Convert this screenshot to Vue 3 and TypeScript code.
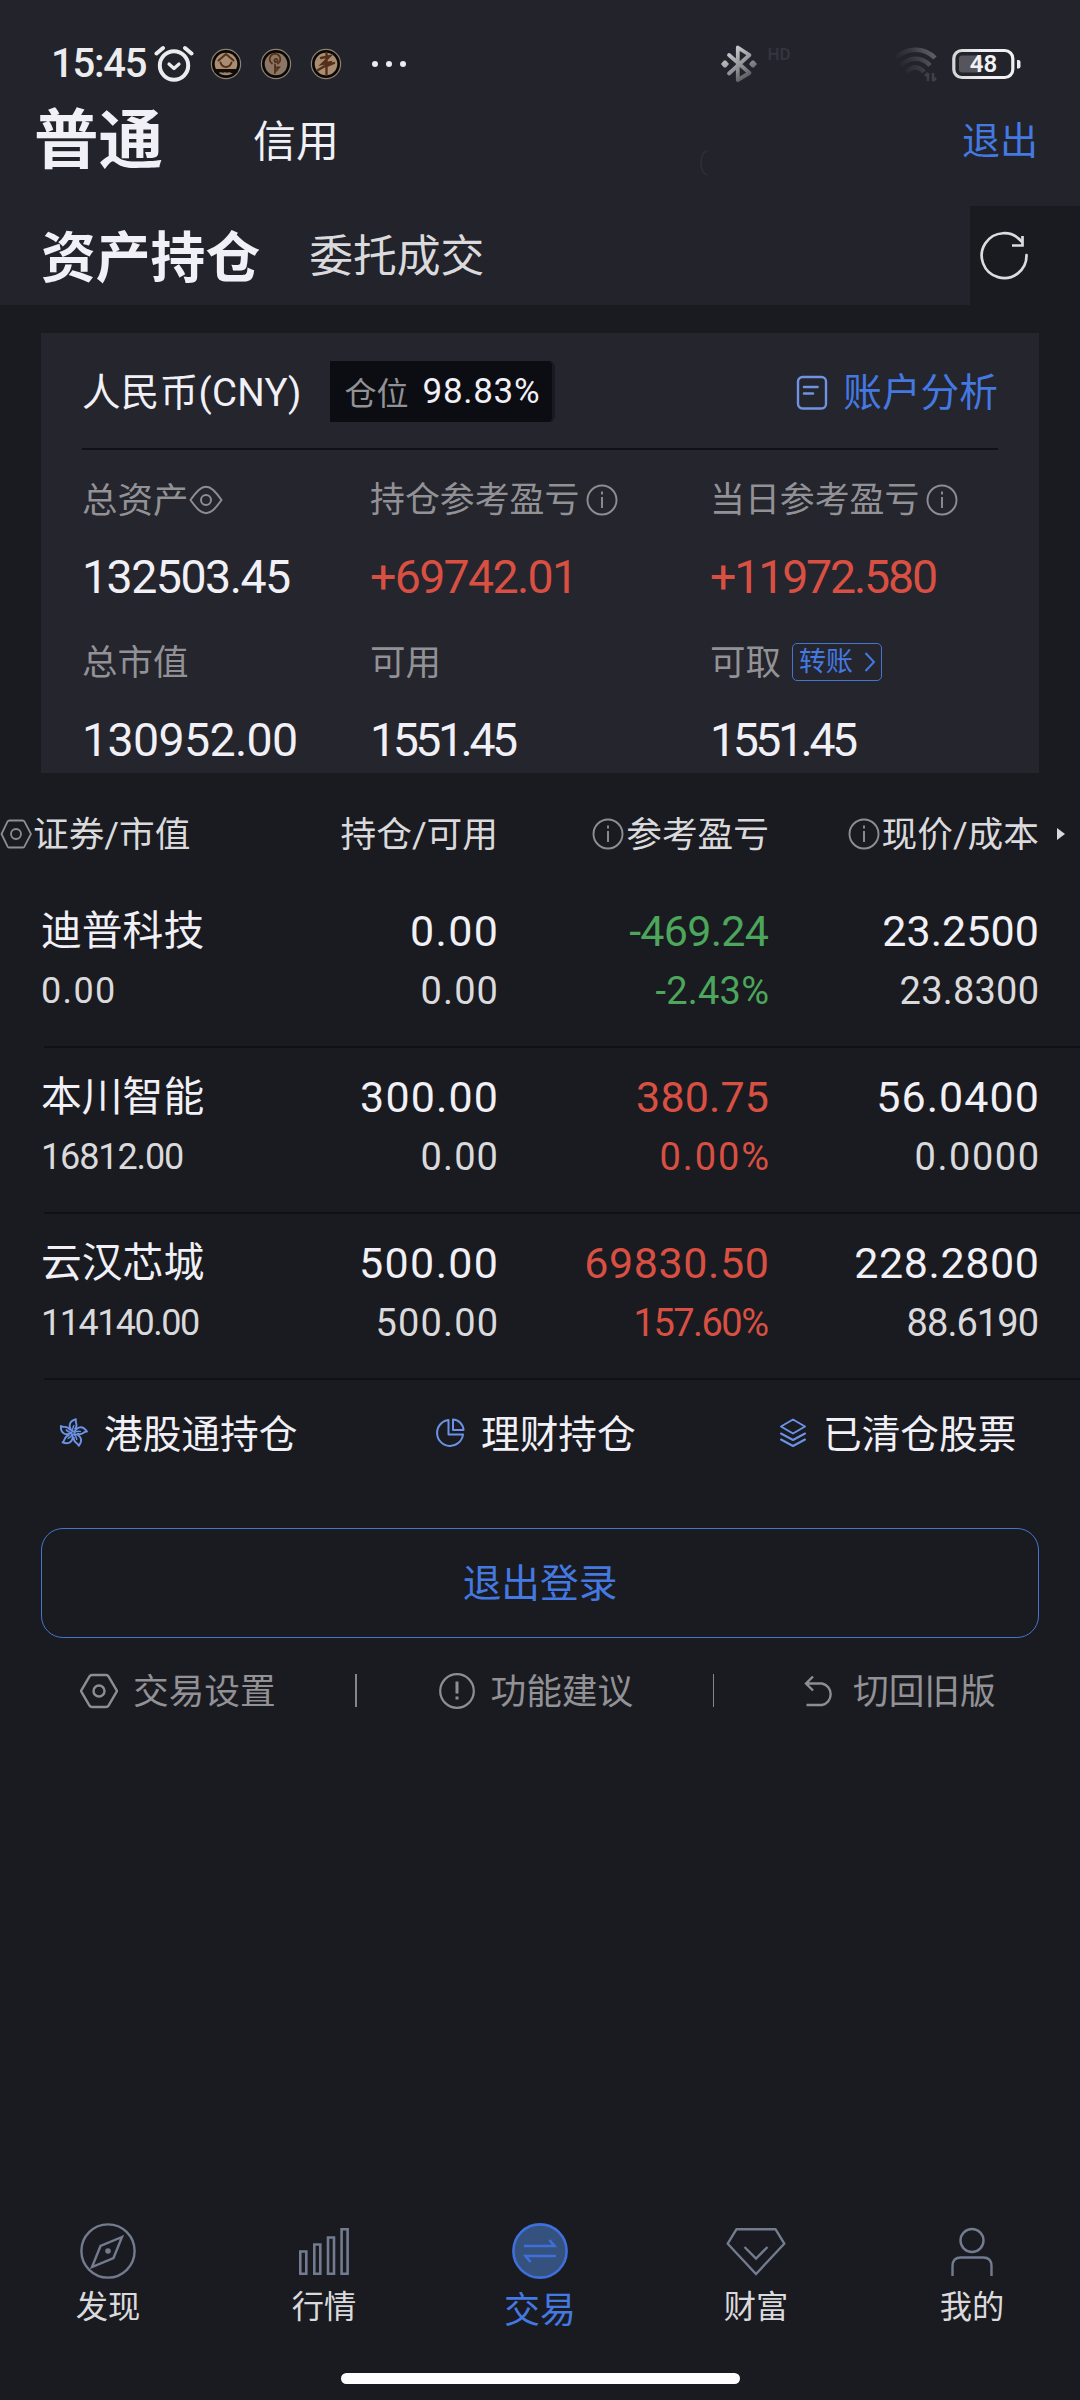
<script setup lang="ts">
import type { Directive } from 'vue'

interface Cell {
  text: string
  width: number
}

interface Holding {
  name: string
  value: Cell
  position: Cell
  available: Cell
  profit: Cell
  rate: Cell
  price: Cell
  cost: Cell
  trend: 'up' | 'down'
}

/* Spreads the characters of a figure so that it takes up the given width. */
const vFit: Directive<HTMLElement, number> = {
  mounted(el, binding) {
    const size = parseFloat(getComputedStyle(el).fontSize)
    const natural = el.getBoundingClientRect().width
    const count = (el.textContent ?? '').length
    const spacing = (binding.value + size * 0.09 - natural) / (count - 1)
    el.style.letterSpacing = `${spacing}px`
    el.style.marginRight = `${-spacing}px`
  },
}

const cell = (text: string, width: number): Cell => ({ text, width })

const holdings: Holding[] = [
  {
    name: '迪普科技',
    value: cell('0.00', 71),
    position: cell('0.00', 84),
    available: cell('0.00', 74),
    profit: cell('-469.24', 136),
    rate: cell('-2.43%', 110),
    price: cell('23.2500', 153),
    cost: cell('23.8300', 136),
    trend: 'down',
  },
  {
    name: '本川智能',
    value: cell('16812.00', 140),
    position: cell('300.00', 134),
    available: cell('0.00', 74),
    profit: cell('380.75', 129),
    rate: cell('0.00%', 106),
    price: cell('56.0400', 159),
    cost: cell('0.0000', 121),
    trend: 'up',
  },
  {
    name: '云汉芯城',
    value: cell('114140.00', 156),
    position: cell('500.00', 135),
    available: cell('500.00', 119),
    profit: cell('69830.50', 181),
    rate: cell('157.60%', 132),
    price: cell('228.2800', 181),
    cost: cell('88.6190', 129),
    trend: 'up',
  },
]
</script>

<template>
  <div class="screen">
    <header class="top">
      <div class="status">
        <span v-fit="93" class="clock">15:45</span>
        <svg class="alarm" width="40" height="38" viewBox="0 0 40 38" fill="none" stroke="#ececee" stroke-linecap="round">
          <circle cx="20" cy="20.5" r="14.2" stroke-width="4" />
          <path d="M2.5 8.5 9 3M37.500 8.500 31 3" stroke-width="4" />
          <path d="M15 19l5 4.500 5-4.500" stroke-width="3.200" stroke-linejoin="round" />
        </svg>
        <svg class="coins" width="132" height="34" viewBox="0 0 132 34" fill="none">
          <g v-for="x in [16, 66, 116]" :key="x">
            <circle :cx="x" cy="17" r="14.600" fill="#0a0807" stroke="#8d8172" stroke-width="1.200" />
            <circle :cx="x" cy="17" r="11.300" :fill="x === 66 ? '#8c7764' : '#a98d72'" />
          </g>
          <g stroke="#54301a" stroke-width="2" stroke-linecap="round">
            <path d="M8.500 13.500 16 7l7.500 6.500M10.500 15.500c2 6 9 6 11 0" />
            <path d="M6 24h20" stroke="#120c09" stroke-width="4" />
            <path d="M10 26h12" stroke="#8d7763" stroke-width="1.500" stroke-dasharray="2 2" />
            <path d="M65 26V17.500M65 20.500h4l-3 3.500M62 16.500a5.300 5.300 0 1 1 6 0M64.500 13a1.600 1.600 0 1 0 3 0 1.600 1.600 0 0 0-3 0" stroke-width="1.800" />
            <path d="M116.500 6v22M111 11l9-2-8 8 10-2-14 8M117 19l7-3" stroke-width="2.400" />
          </g>
        </svg>
        <span class="dots"><i /><i /><i /></span>
        <svg class="signals" width="310" height="44" viewBox="0 0 310 44" fill="none">
          <defs>
            <linearGradient id="fade-bt" gradientUnits="userSpaceOnUse" x1="8" y1="6" x2="32" y2="42">
              <stop offset="0" stop-color="#d4d4d6" />
              <stop offset=".55" stop-color="#8b8b90" />
              <stop offset="1" stop-color="#3a3a42" />
            </linearGradient>
            <linearGradient id="fade-wifi" gradientUnits="userSpaceOnUse" x1="222" y1="14" x2="183" y2="34">
              <stop offset="0" stop-color="#6c6c73" />
              <stop offset=".55" stop-color="#3a3a42" />
              <stop offset="1" stop-color="#22232b" />
            </linearGradient>
            <linearGradient id="fade-battery" x1="0" y1="0" x2="1" y2="0">
              <stop offset="0" stop-color="#d5d5d8" />
              <stop offset=".5" stop-color="#f0f0f2" />
            </linearGradient>
          </defs>
          <path d="M9 13 29.500 31 17.800 38V5.500L29.500 13 9 31.500" stroke="url(#fade-bt)" stroke-width="3.800" stroke-linejoin="round" stroke-linecap="round" />
          <path d="M1 22l3-3.500h2l3 3.500-3 3.500H4zM29 22l3-3.500h2l3 3.500-3 3.500h-2z" fill="url(#fade-bt)" />
          <g stroke="url(#fade-wifi)" stroke-width="4.500">
            <path d="M176 16c11-11 28-11 39 0" />
            <path d="M181 23.500c8-9 21-9 29 0" />
            <path d="M187 30c5-6 12-6 17 0" />
          </g>
          <path d="M208 31v8M208 31l-3 3M213 39v-8M213 39l3-3" stroke="#404048" stroke-width="2.500" />
          <rect x="233.800" y="8.500" width="59" height="27" rx="8" stroke="url(#fade-battery)" stroke-width="3.200" />
          <rect x="239" y="13.500" width="23" height="17" rx="3" fill="#55555b" />
          <path d="M297 18h1.500q2 0 2 2v4.500q0 2-2 2H297z" fill="#ececee" />
          <text class="hd" x="47.500" y="18">HD</text>
          <text class="level" x="263.500" y="30.300" text-anchor="middle">48</text>
        </svg>
      </div>
      <nav class="modes">
        <h1>普通</h1>
        <span class="mode">信用</span>
        <svg class="ghost" width="16" height="26" viewBox="0 0 16 26" fill="none" stroke="#2c2d35" stroke-width="2"><path d="M8 1C0 3 0 22 8 25" /></svg>
        <a class="quit">退出</a>
      </nav>
    </header>

    <div class="tabs">
      <div class="tab-bar">
        <h2>资产持仓</h2>
        <span>委托成交</span>
      </div>
      <div class="reload">
        <svg width="52" height="52" viewBox="0 0 52 52" fill="none" stroke="#dcdcdf" stroke-width="2.700">
          <path d="M48.500 25a22.400 22.400 0 1 1-5-13.500" stroke-linecap="round" />
          <path d="M44.500 6v9.500H34" />
        </svg>
      </div>
    </div>

    <section class="card">
      <div class="card-head">
        <span v-fit="216" class="currency">人民币(CNY)</span>
        <span class="ratio"><em>仓位</em><b v-fit="114">98.83%</b></span>
        <a class="analysis">
          <svg width="32" height="36" viewBox="0 0 32 36" fill="none" stroke="#6f93e0" stroke-linecap="round">
            <rect x="2" y="2" width="28" height="31.500" rx="4.500" stroke-width="2.400" />
            <path d="M8 12h13.500M8 18.500h9" stroke-width="2.600" />
          </svg>
          <span>账户分析</span>
        </a>
      </div>
      <div class="figures">
        <div class="label">
          总资产
          <svg class="eye" width="34" height="30" viewBox="0 0 34 30" fill="none" stroke="#8e8e92" stroke-width="2">
            <path d="M1.500 15C8 6 12 1.800 17 1.800S26 6 32.500 15C26 24 22 28.200 17 28.200S8 24 1.500 15z" />
            <circle cx="17" cy="15" r="5" />
          </svg>
        </div>
        <div class="label long">
          持仓参考盈亏
          <svg class="info" viewBox="0 0 32 32"><circle cx="16" cy="16" r="14.500" /><path d="M16 13v11M16 7.500v3" /></svg>
        </div>
        <div class="label long">
          当日参考盈亏
          <svg class="info" viewBox="0 0 32 32"><circle cx="16" cy="16" r="14.500" /><path d="M16 13v11M16 7.500v3" /></svg>
        </div>
        <div class="figure"><span v-fit="205">132503.45</span></div>
        <div class="figure up"><span v-fit="204">+69742.01</span></div>
        <div class="figure up"><span v-fit="224">+11972.580</span></div>
        <div class="label">总市值</div>
        <div class="label">可用</div>
        <div class="label">
          可取
          <a class="transfer">
            转账
            <svg width="12" height="20" viewBox="0 0 12 20" fill="none" stroke="#4479e2" stroke-width="2"><path d="M1.500 1l8.500 9-8.500 9" /></svg>
          </a>
        </div>
        <div class="figure"><span v-fit="212">130952.00</span></div>
        <div class="figure"><span v-fit="144">1551.45</span></div>
        <div class="figure"><span v-fit="144">1551.45</span></div>
      </div>
    </section>

    <section class="holdings">
      <div class="columns">
        <span class="first">
          <svg width="32" height="30" viewBox="0 0 32 30" fill="none" stroke="#8e8e92" stroke-width="1.800">
            <path d="M9.500 1.500h13q1.300 0 2 1.100L31 15l-6.500 12.400q-.7 1.100-2 1.100h-13q-1.300 0-2-1.100L1.500 15 7.500 2.600q.7-1.100 2-1.100z" />
            <circle cx="16" cy="15" r="5" />
          </svg>证券/市值
        </span>
        <span>持仓/可用</span>
        <span>
          <svg class="info" viewBox="0 0 32 32"><circle cx="16" cy="16" r="14.500" /><path d="M16 13v11M16 7.500v3" /></svg>参考盈亏
        </span>
        <span>
          <svg class="info" viewBox="0 0 32 32"><circle cx="16" cy="16" r="14.500" /><path d="M16 13v11M16 7.500v3" /></svg>现价/成本
        </span>
        <i class="more" />
      </div>
      <div v-for="h in holdings" :key="h.name" class="row">
        <div class="main name">{{ h.name }}</div>
        <div class="main"><span v-fit="h.position.width">{{ h.position.text }}</span></div>
        <div class="main" :class="h.trend"><span v-fit="h.profit.width">{{ h.profit.text }}</span></div>
        <div class="main"><span v-fit="h.price.width">{{ h.price.text }}</span></div>
        <div class="sub worth"><span v-fit="h.value.width">{{ h.value.text }}</span></div>
        <div class="sub"><span v-fit="h.available.width">{{ h.available.text }}</span></div>
        <div class="sub" :class="h.trend"><span v-fit="h.rate.width">{{ h.rate.text }}</span></div>
        <div class="sub"><span v-fit="h.cost.width">{{ h.cost.text }}</span></div>
      </div>
    </section>

    <div class="links">
      <a>
        <svg width="30" height="30" viewBox="-15 -15 30 30" fill="none" stroke="#6b92e6" stroke-width="1.900" stroke-linejoin="round">
          <g v-for="a in [0, 72, 144, 216, 288]" :key="a" :transform="`rotate(${a + 8})`">
            <path d="M0-1C-6-5-6-11 1-14 0-11 5-8 1-4" />
            <path d="M0-1C-1.500-4-1-6 0-8" stroke-width="1.300" />
          </g>
        </svg>
        港股通持仓
      </a>
      <a>
        <svg width="30" height="30" viewBox="0 0 30 30" fill="none" stroke="#6b92e6" stroke-width="2" stroke-linejoin="round">
          <path d="M13.500 2A13 13 0 1 0 28 16.500H13.500z" />
          <path d="M18 1.500v10.500h10.500A11 11 0 0 0 18 1.500z" />
        </svg>
        理财持仓
      </a>
      <a>
        <svg width="28" height="30" viewBox="0 0 28 30" fill="none" stroke="#6b92e6" stroke-width="2" stroke-linejoin="round" stroke-linecap="round">
          <path d="M14 1.500 26 8.500 14 15.500 2 8.500zM2 15.500l12 6.500 12-6.500M2 21.500 14 28l12-6.500" />
        </svg>
        已清仓股票
      </a>
    </div>

    <button class="logout">退出登录</button>

    <div class="tools">
      <a>
        <svg width="38" height="36" viewBox="0 0 38 36" fill="none" stroke="#8e8e92" stroke-width="2.400">
          <path d="M12 2h14q1.700 0 2.500 1.400L37 18l-8.500 14.600Q27.700 34 26 34H12q-1.700 0-2.500-1.400L1 18 9.500 3.400Q10.300 2 12 2z" />
          <circle cx="19" cy="18" r="5.500" />
        </svg>
        交易设置
      </a>
      <i />
      <a>
        <svg width="38" height="38" viewBox="0 0 38 38" fill="none" stroke="#8e8e92" stroke-width="2.200">
          <circle cx="19" cy="19" r="16.800" />
          <path d="M19 9.500v12M19 24.500v3" stroke-width="3" />
        </svg>
        功能建议
      </a>
      <i />
      <a>
        <svg width="30" height="32" viewBox="0 0 30 32" fill="none" stroke="#8e8e92" stroke-width="2.400">
          <path d="M9 1.500 2 8.500l7 7M2 8.500h16a11 11 0 0 1 0 21.500H2.500" />
        </svg>
        切回旧版
      </a>
    </div>

    <footer class="dock">
      <nav>
        <a>
          <svg width="60" height="60" viewBox="0 0 60 60" fill="none" stroke="#727b8f" stroke-width="2.400">
            <circle cx="30" cy="30" r="26.600" />
            <path d="M44 16 22.500 25 14 46l21.500-9z" />
            <circle cx="30" cy="30" r="2.800" fill="#727b8f" stroke="none" />
          </svg>
          <span>发现</span>
        </a>
        <a>
          <svg width="60" height="60" viewBox="0 0 60 60" fill="none" stroke="#727b8f" stroke-width="2.600">
            <path d="M6.300 30.500h6v22.200h-6zM20.300 23.500h6v29.200h-6zM34 16.500h6v36.200h-6zM47.600 8.300h6v44.400h-6z" />
          </svg>
          <span>行情</span>
        </a>
        <a class="active">
          <svg width="60" height="60" viewBox="0 0 60 60" fill="none" stroke="#3f6fdc" stroke-width="2.600">
            <circle cx="30" cy="30" r="26.600" fill="#34527d" />
            <path d="M14 25h30.500l-5-6M46 35H15.500l5 6" />
          </svg>
          <span>交易</span>
        </a>
        <a>
          <svg width="60" height="60" viewBox="0 0 60 60" fill="none" stroke="#727b8f" stroke-width="2.400">
            <path d="M10.500 8.200h39l8.800 14.500L30 53 1.700 22.700z" />
            <path d="M18.500 26 30 37.500 41.500 26" />
          </svg>
          <span>财富</span>
        </a>
        <a>
          <svg width="60" height="60" viewBox="0 0 60 60" fill="none" stroke="#727b8f" stroke-width="2.400">
            <circle cx="30" cy="19.500" r="11.500" />
            <path d="M10.500 55V45q0-8.500 8.500-8.500h22q8.500 0 8.500 8.500v10" />
          </svg>
          <span>我的</span>
        </a>
      </nav>
      <div class="home" />
    </footer>
  </div>
</template>

<style>
body {
  background: #1a1b20;
}
</style>

<style scoped>
.screen {
  width: 1080px;
  height: 2400px;
  overflow: hidden;
  display: flex;
  flex-direction: column;
  background: #1a1b20;
  color: #f0f0f6;
  font-family: Roboto, 'Noto Sans CJK SC', sans-serif;
  white-space: nowrap;
}

.screen h1,
.screen h2 {
  margin: 0;
}

svg {
  display: block;
  flex: none;
}

.clock,
.currency,
.ratio b,
.figure span,
.main span,
.sub span {
  display: inline-block;
}

.top {
  height: 206px;
  background: #22232b;
}

.status {
  display: flex;
  align-items: center;
  height: 88px;
  padding: 40px 0 0 51px;
  box-sizing: border-box;
}

.clock {
  font-size: 40px;
  font-weight: 500;
  line-height: 48px;
  color: #ececee;
}

.alarm {
  margin-left: 6px;
}

.coins {
  margin-left: 16px;
}

.dots {
  display: flex;
  gap: 7.500px;
  margin-left: 30px;
}

.dots i {
  width: 6.500px;
  height: 6.500px;
  border-radius: 50%;
  background: #ececee;
}

.signals {
  margin-left: auto;
  margin-right: 50px;
}

.hd {
  font: 600 17px Roboto, sans-serif;
  fill: #34353d;
}

.level {
  font: 600 24px Roboto, sans-serif;
  fill: #f2f2f4;
}

.modes {
  display: flex;
  align-items: center;
  height: 104px;
  padding: 0 42px 0 34px;
}

.modes h1 {
  padding-top: 2px;
  font-size: 64.500px;
  line-height: 100px;
  font-weight: 700;
}

.mode {
  margin-left: 90px;
  padding-bottom: 5px;
  font-size: 43px;
}

.ghost {
  margin: 46px 0 0 360px;
}

.quit {
  margin-left: auto;
  padding-bottom: 6px;
  font-size: 38px;
  color: #4479e2;
}

.tabs {
  display: flex;
  height: 99px;
}

.tab-bar {
  display: flex;
  align-items: center;
  width: 970px;
  padding: 0 0 5px 41px;
  box-sizing: border-box;
  background: #22232b;
}

.tab-bar h2 {
  font-size: 54.800px;
  font-weight: 700;
}

.tab-bar span {
  margin-left: 49px;
  font-size: 43.800px;
  color: #dadadd;
}

.reload {
  display: flex;
  align-items: center;
  padding-left: 8px;
}

.card {
  width: 998px;
  height: 440px;
  margin: 28px 0 0 41px;
  background: #24252d;
}

.card-head {
  display: flex;
  align-items: center;
  height: 117px;
  margin: 0 41px;
  border-bottom: 2px solid #101116;
  box-sizing: border-box;
}

.currency {
  padding-bottom: 3px;
  font-size: 38.500px;
}

.ratio {
  display: flex;
  align-items: center;
  width: 225px;
  height: 61px;
  margin: 2px 0 0 29px;
  padding-left: 14px;
  box-sizing: border-box;
  border-right: 3px solid #191a20;
  border-radius: 0 6px 6px 0;
  background: #0c0d12;
}

.ratio em {
  padding-bottom: 2px;
  font-size: 32px;
  font-style: normal;
  color: #929296;
}

.ratio b {
  margin-left: 14px;
  font-size: 35px;
  font-weight: 400;
}

.analysis {
  display: flex;
  align-items: center;
  gap: 15px;
  margin-left: auto;
  font-size: 38.700px;
  color: #4479e2;
}

.analysis svg {
  margin-top: 5px;
}

.analysis span {
  padding-bottom: 3px;
}

.figures {
  display: grid;
  grid-template-columns: 288px 340px auto;
  grid-template-rows: 84px 70px 100px 56px;
  align-items: center;
  margin-left: 41px;
  padding-top: 7.500px;
}

.label {
  display: flex;
  align-items: center;
  padding-bottom: 5px;
  font-size: 35.500px;
  color: #929296;
}

.label.long {
  font-size: 34.900px;
}

.label svg,
.label .transfer {
  margin-top: 5px;
}

.eye {
  margin-left: 0;
}

.info {
  width: 32px;
  height: 32px;
  fill: none;
  stroke: #8e8e92;
  stroke-width: 1.900;
}

.label .info {
  margin-left: 7px;
}

.figure {
  font-size: 46.500px;
  line-height: 50px;
}

.transfer {
  display: flex;
  align-items: center;
  gap: 11px;
  width: 90px;
  height: 38px;
  margin-left: 11px;
  padding-left: 6px;
  box-sizing: border-box;
  border: 1.500px solid #4575ce;
  border-radius: 5px;
  font-size: 27px;
  line-height: 34px;
  color: #4479e2;
}

.label .transfer svg {
  margin-top: 0;
}

.up {
  color: #d95043;
}

.down {
  color: #4ca65b;
}

.columns {
  display: grid;
  grid-template-columns: 267px 231px 271px 270px auto;
  align-items: center;
  height: 121px;
  font-size: 35.700px;
  color: #dadadd;
}

.columns span {
  display: flex;
  align-items: center;
  justify-content: flex-end;
  gap: 2px;
  padding-bottom: 5px;
}

.columns svg {
  margin-top: 5px;
}

.columns .first {
  justify-content: flex-start;
  gap: 1px;
}

.more {
  width: 0;
  margin-left: 18px;
  border: solid transparent;
  border-width: 6.500px 0 6.500px 8px;
  border-left-color: #dadadd;
}

.row {
  display: grid;
  grid-template-columns: 226px 231px 271px 270px;
  grid-template-rows: 62px 58px;
  align-content: start;
  height: 166px;
  margin-left: 41px;
  padding-top: 18px;
  box-sizing: border-box;
  background: linear-gradient(#101116, #101116) 3px 100% / 100% 2px no-repeat;
}

.holdings .row:nth-child(2) {
  height: 154px;
  padding-top: 6px;
}

.main {
  align-self: center;
  text-align: right;
  font-size: 43px;
  line-height: 50px;
}

.sub {
  align-self: center;
  text-align: right;
  font-size: 38px;
  line-height: 44px;
  color: #dadadd;
}

.main.name {
  text-align: left;
  font-size: 40.800px;
}

.sub.worth {
  text-align: left;
  font-size: 36px;
}

.main.up,
.sub.up {
  color: #d95043;
}

.main.down,
.sub.down {
  color: #4ca65b;
}

.links {
  display: grid;
  grid-template-columns: 377px 344px auto;
  align-items: center;
  height: 108px;
  padding-left: 58px;
  font-size: 38.700px;
}

.links a {
  display: flex;
  align-items: center;
  gap: 16px;
  padding-bottom: 6px;
}

.links svg {
  margin-top: 4px;
}

.logout {
  flex: none;
  width: 998px;
  height: 110px;
  margin: 40px 0 0 41px;
  padding: 0 0 6px;
  border: 1.500px solid #4575ce;
  border-radius: 22px;
  background: none;
  font: 38.700px/1 'Noto Sans CJK SC', sans-serif;
  color: #4479e2;
}

.tools {
  display: flex;
  align-items: center;
  height: 105px;
  padding-left: 80px;
  font-size: 35.700px;
  color: #929296;
}

.tools a {
  display: flex;
  align-items: center;
  gap: 15px;
  width: 275px;
  padding-bottom: 5px;
}

.tools a + i + a {
  width: 275px;
  margin-left: 81px;
}

.tools a:last-child {
  margin-left: 90px;
  gap: 19px;
}

.tools svg {
  margin-top: 5px;
}

.tools i {
  width: 1.500px;
  height: 33px;
  background: #85858a;
}

.dock {
  margin-top: auto;
  height: 179px;
}

.dock nav {
  display: flex;
}

.dock a {
  display: flex;
  flex-direction: column;
  align-items: center;
  width: 216px;
  height: 117px;
  font-size: 32.300px;
  color: #dadadd;
}

.dock a span {
  line-height: 52px;
}

.dock .active {
  font-size: 36px;
  color: #4479e2;
}

.dock .active span {
  line-height: 61px;
}

.home {
  width: 399px;
  height: 11px;
  margin: 35px auto 0;
  border-radius: 6px;
  background: #fff;
}
</style>
